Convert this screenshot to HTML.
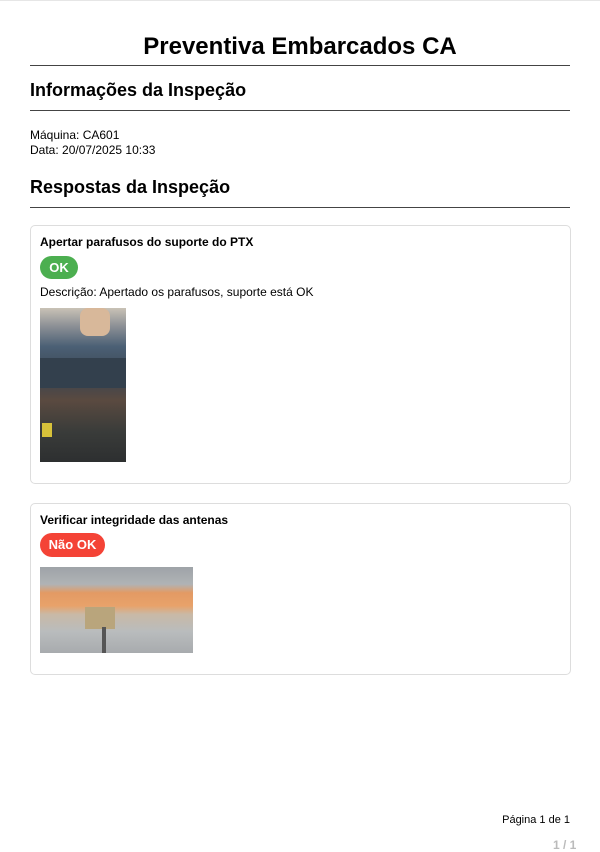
<!DOCTYPE html>
<html><head><meta charset="utf-8"><style>
body{margin:0;width:600px;height:851px;background:#fff;font-family:"Liberation Sans",Arial,sans-serif;color:#000;position:relative;overflow:hidden}
.a{position:absolute;white-space:nowrap}
.hr{position:absolute;left:30px;width:540px;height:1px;background:#444}
.card{position:absolute;left:30px;width:539px;border:1px solid #ddd;border-radius:5px}
.badge{position:absolute;color:#fff;font-weight:bold;font-size:13px;border-radius:12px;text-align:center}
</style></head><body>
<div class="a" style="left:0;top:0;width:600px;height:1px;background:#e6e6e6"></div>
<div class="a" style="left:0;width:600px;top:33px;text-align:center;font-size:24px;font-weight:bold">Preventiva Embarcados CA</div>
<div class="hr" style="top:65px"></div>
<div class="a" style="left:30px;top:80px;font-size:18px;font-weight:bold">Informações da Inspeção</div>
<div class="hr" style="top:110px"></div>
<div class="a" style="left:30px;top:128px;font-size:12px;line-height:15px">Máquina: CA601<br>Data: 20/07/2025 10:33</div>
<div class="a" style="left:30px;top:177px;font-size:18px;font-weight:bold">Respostas da Inspeção</div>
<div class="hr" style="top:207px"></div>

<div class="card" style="top:225px;height:257px"></div>
<div class="a" style="left:40px;top:235px;font-size:12px;font-weight:bold">Apertar parafusos do suporte do PTX</div>
<div class="badge" style="left:40px;top:256px;width:38px;height:23px;line-height:23px;background:#4caf50">OK</div>
<div class="a" style="left:40px;top:285px;font-size:12px">Descrição: Apertado os parafusos, suporte está OK</div>
<div class="a" style="left:40px;top:308px;width:86px;height:154px;background:linear-gradient(180deg,#c9c2b6 0%,#8b8f95 12%,#4b6075 25%,#3b4450 45%,#5a4a40 60%,#3a3c3a 80%,#2d2f30 100%)">
<div class="a" style="left:40px;top:0;width:30px;height:28px;background:#d8b89a;border-radius:8px"></div>
<div class="a" style="left:0;top:50px;width:86px;height:30px;background:#33404d"></div>
<div class="a" style="left:2px;top:115px;width:10px;height:14px;background:#d8c23a"></div>
</div>

<div class="card" style="top:503px;height:170px"></div>
<div class="a" style="left:40px;top:513px;font-size:12px;font-weight:bold">Verificar integridade das antenas</div>
<div class="badge" style="left:40px;top:533px;width:65px;height:24px;line-height:24px;background:#f44336">Não OK</div>
<div class="a" style="left:40px;top:567px;width:153px;height:86px;background:linear-gradient(180deg,#9ea3a8 0%,#b0b3b5 20%,#e39a64 30%,#e8a26a 45%,#c9b9a6 55%,#b9bcbd 75%,#a8abae 100%)">
<div class="a" style="left:45px;top:40px;width:30px;height:22px;background:#b9a57c"></div>
<div class="a" style="left:62px;top:60px;width:4px;height:26px;background:#555"></div>
</div>

<div class="a" style="right:30px;top:814px;font-size:11px">Página 1 de 1</div>
<div class="a" style="left:553px;top:838px;font-size:12px;color:#bbb;font-weight:bold">1 / 1</div>
</body></html>
